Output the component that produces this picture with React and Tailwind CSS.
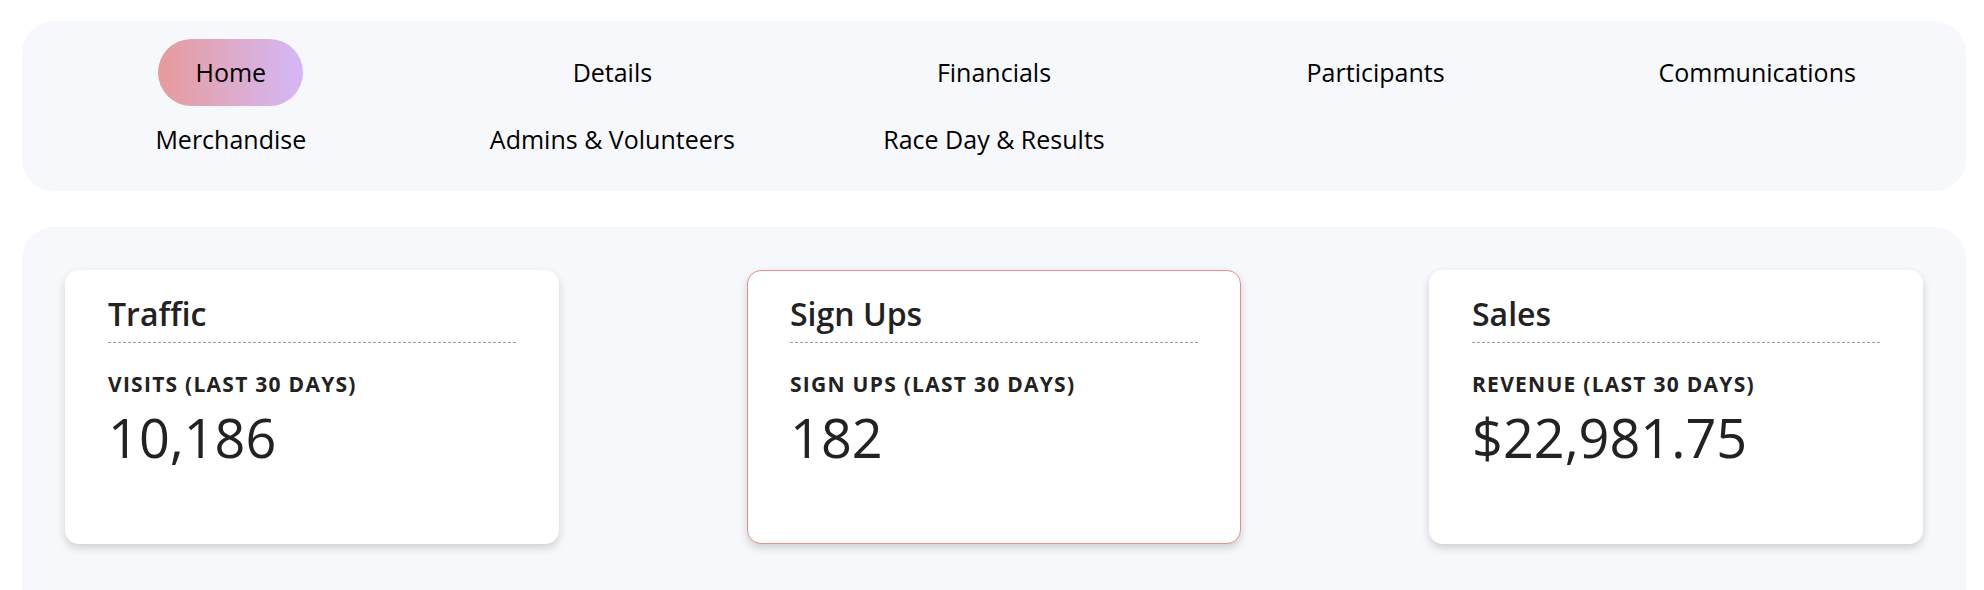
import React from "react";

const navItems = [
  "Home",
  "Details",
  "Financials",
  "Participants",
  "Communications",
  "Merchandise",
  "Admins & Volunteers",
  "Race Day & Results",
];

const cards = [
  { title: "Traffic", label: "VISITS (LAST 30 DAYS)", value: "10,186", active: false },
  { title: "Sign Ups", label: "SIGN UPS (LAST 30 DAYS)", value: "182", active: true },
  { title: "Sales", label: "REVENUE (LAST 30 DAYS)", value: "$22,981.75", active: false },
];

export default function App() {
  return (
    <div
      className="min-h-[590px] bg-white pl-[22px] pr-[18px] pt-[21px] text-black"
      style={{ fontFamily: '"Open Sans", "Noto Sans", sans-serif' }}
    >
      <nav className="rounded-[32px] bg-[#f7f8fc] p-[18px]">
        <div className="grid grid-cols-5">
          {navItems.map((item, i) => (
            <div key={item} className="flex h-[67px] items-center justify-center">
              {i === 0 ? (
                <span className="flex h-[67px] items-center rounded-full bg-gradient-to-r from-[#e79a9a] to-[#d3b8f7] px-[37px] text-[25px] text-black">
                  {item}
                </span>
              ) : (
                <span className="text-[25px] text-black">{item}</span>
              )}
            </div>
          ))}
        </div>
      </nav>

      <section className="mt-[36px] rounded-t-[32px] bg-[#f7f8fc] px-[43px] pb-[60px] pt-[43px]">
        <div className="flex justify-between">
          {cards.map((c) => (
            <div
              key={c.title}
              className={
                "h-[274px] w-[494px] rounded-[14px] bg-white px-[42px] pt-[21px] text-[#222] shadow-[0_4px_9px_rgba(0,0,0,0.16)] " +
                (c.active ? "border border-[#e58f8f]" : "border border-transparent")
              }
            >
              <div className="border-b border-dashed border-[#9c9c9c] pb-[6px] text-[32px] font-semibold leading-[44px]">
                {c.title}
              </div>
              <div className="mt-[26px] text-[21px] font-bold leading-[30px] tracking-[0.06em]">
                {c.label}
              </div>
              <div className="mt-[6px] text-[54px] leading-[65px]">{c.value}</div>
            </div>
          ))}
        </div>
      </section>
    </div>
  );
}
